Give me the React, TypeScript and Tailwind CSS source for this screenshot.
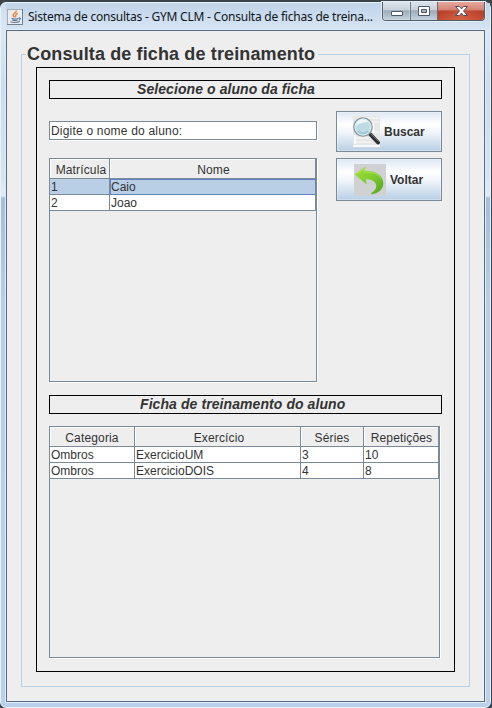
import type { ReactNode } from "react";

function JavaIcon() {
  return (
    <svg width="16" height="16" viewBox="0 0 16 16" className="shrink-0">
      <rect x=".5" y=".5" width="15" height="15" fill="#e9edf1" stroke="#a5adb7" />
      <path d="M15.5 0v15.5H0" fill="none" stroke="#747f8b" />
      <path d="M9.3 1.7C9.8 4 5 4.6 6.2 6.7l1.2 1.7M10.8 4.2C7.5 5.4 9.6 6.3 8.2 8.2" fill="none" stroke="#e28a43" strokeWidth="1.5" />
      <path d="M4.5 9.3c1.5.8 5 .8 7-.1M5.3 11c1.5.7 3.8.6 5.2 0M11.7 9c2.3-.7 2.3 1.5 0 2.2M3.5 12.8c2 1.1 7 .9 9.3-.2" fill="none" stroke="#607c9c" strokeWidth="1.1" />
    </svg>
  );
}

function SearchIcon() {
  return (
    <svg width="27" height="31" viewBox="0 0 27 31" className="shrink-0">
      <rect width="27" height="31" fill="#e6e7e7" />
      <path d="M9 2h17M18 6h8M18 16h8M2 22h14M2 26h16" stroke="#f5f5f5" strokeWidth="1.5" />
      <path d="M0 30h27M20 7v10M2 19v9" stroke="#fff" strokeWidth="1.5" />
      <path d="m16 17 9 9.5" stroke="#2c2f31" strokeWidth="3.8" strokeLinecap="round" />
      <path d="m17.5 17.5 8 8" stroke="#777b7d" strokeWidth=".9" />
      <circle cx="10" cy="11" r="9.2" fill="#bddce6" stroke="#8a969c" strokeWidth="1.3" />
      <circle cx="10" cy="11" r="8" fill="none" stroke="#deedf2" strokeWidth="1" />
      <path d="M3 10a7 7 0 0 1 12.5-4C11 6 7 7 3 10Z" fill="#eef8fa" />
      <path d="M5 15c3 3 7 3 10 0" fill="none" stroke="#a0cad6" strokeWidth="2" />
    </svg>
  );
}

function BackIcon() {
  return (
    <svg width="32" height="32" viewBox="0 0 32 32" className="shrink-0">
      <defs>
        <linearGradient id="green" x1="0" y1="0" x2="1" y2="1">
          <stop stopColor="#a4df3c" />
          <stop offset=".55" stopColor="#7aca2d" />
          <stop offset="1" stopColor="#529f22" />
        </linearGradient>
      </defs>
      <rect width="32" height="32" fill="#d0d1d2" />
      <path d="M.7 10.5 11.2 2.8v4.3C21 6.5 28.8 11 29.3 19c.3 5.7-4.3 10.2-11.8 11.4l-.5-1c4.3-2.8 6.1-6.1 4.8-9.4-1.3-3.2-4.7-4.8-9.9-4.8l.8 5.2Z" fill="url(#green)" />
      <path d="m2 10.5 8.3-6v3.7c7.5-.4 13.5 1.4 16.7 6.2" fill="none" stroke="#b8e85b" strokeWidth=".7" />
    </svg>
  );
}

function WindowControls() {
  return (
    <div className="flex h-[19px] w-[103px] overflow-hidden rounded-b-[4px] border border-t-0 border-[#505d6b] shadow-[0_0_0_1px_#e4eef8]">
      <div className="w-[28px] border-r border-[#6f7c89] bg-[linear-gradient(#dce3ea_0%,#c7d0da_45%,#9dabb9_48%,#c4d1df_100%)] shadow-[inset_0_0_0_1px_#e2e9f055]">
        <svg width="27" height="18"><rect x="8.5" y="9.5" width="11" height="4" rx=".5" fill="#fff" stroke="#4c5865" /></svg>
      </div>
      <div className="w-[27px] border-r border-[#6f656d] bg-[linear-gradient(#dce3ea_0%,#c7d0da_45%,#9dabb9_48%,#c4d1df_100%)]">
        <svg width="26" height="18"><path fillRule="evenodd" d="M7.5 4.5h11v9h-11Zm3 3v3h5v-3Z" fill="#fff" stroke="#4c5865" /></svg>
      </div>
      <div className="flex-1 bg-[radial-gradient(ellipse_at_50%_100%,#e27a5680,transparent_65%),linear-gradient(#e7a89e_0%,#d18274_45%,#b74028_49%,#c74b33_100%)]">
        <svg width="46" height="18"><path d="M17.5 4.5h4l2 2.4 2-2.4h4l-4 4.5 4 4.5h-4l-2-2.4-2 2.4h-4l4-4.5Z" fill="#fff" stroke="#584b55" strokeLinejoin="round" /></svg>
      </div>
    </div>
  );
}

function Heading({ children, className }: { children: ReactNode; className: string }) {
  return <div className={`h-[19px] w-[393px] border border-black text-[14px] leading-[17px] font-bold tracking-[0.08px] italic ${className}`}>{children}</div>;
}

function HeaderCell({ children, className = "" }: { children: ReactNode; className?: string }) {
  return <div className={`h-5 border-r border-b border-[#7a8a99] pt-px text-center leading-[20px] tracking-[0.15px] shadow-[inset_1px_1px_white] ${className}`}>{children}</div>;
}

function Cell({ children, className = "" }: { children: ReactNode; className?: string }) {
  return <div className={`h-4 border-r border-b border-[#7a8a99] bg-white pl-px leading-[16px] ${className}`}>{children}</div>;
}

function ActionButton({ icon, label, className }: { icon: ReactNode; label: string; className: string }) {
  return <button className={`flex w-[106px] items-center border border-[#7a8a99] bg-[linear-gradient(#dde8f3_0%,#fff_32%,#edf3f9_55%,#b8cfe5_100%)] font-bold shadow-[inset_0_0_0_1px_#ffffff55] ${className}`}>{icon}{label}</button>;
}

export default function App() {
  return (
    <div className="h-[708px] w-[492px] bg-[#3c444c] pt-[2px] font-['Liberation_Sans',Arial,sans-serif] text-[12px] text-[#333]">
      <div className="h-[706px] w-[491px] rounded-[6px] border border-[#e8f2fc] bg-[linear-gradient(#ccdef0_0px,#dce8f5_28px,#cbddee_85px,#d5e3f2_170px,#e0ebf7_193px,#a4bfda_195px,#b7cfe8_300px,#b9d1ea_706px)] pl-[5px]">
        <header className="flex h-[27px] items-start bg-[linear-gradient(#c0d4e9,#d7e5f3)]">
          <div className="flex w-[375px] items-center gap-[5px] pt-[5px] pl-px font-['Noto_Sans','Open_Sans',sans-serif] text-[12px] leading-[18px] tracking-[-0.22px] whitespace-nowrap text-[#10151a]"><JavaIcon /><span>Sistema de consultas - GYM CLM - Consulta de fichas de treina...</span></div>
          <div className="-mt-px ml-px"><WindowControls /></div>
        </header>
        <main className="h-[672px] w-[479px] border border-[#596b80] bg-[#eee] pt-[11px] pl-[14px] shadow-[0_0_0_1px_#dfebf6]">
          <fieldset className="h-[645px] w-[449px] border border-[#b8cfe5] pl-[14px]">
            <legend className="-ml-[10px] h-[25px] w-[292px] pl-px text-[18px] leading-[24px] font-bold tracking-[0.13px] whitespace-nowrap">Consulta de ficha de treinamento</legend>
            <section className="h-[605px] w-[419px] border border-black pt-3 pl-3">
              <Heading className="pl-[87px]">Selecione o aluno da ficha</Heading>
              <div className="mt-3 flex justify-between pr-[12px]">
                <div className="pt-[10px]">
                  <div className="h-[19px] w-[268px] border border-[#7a8a99] bg-white pl-px leading-[19px] tracking-[0.2px] shadow-[1px_1px_white]">Digite o nome do aluno:</div>
                  <div className="mt-[18px] h-[224px] w-[268px] border border-[#7a8a99] shadow-[1px_1px_white]">
                    <div className="grid grid-cols-[60px_206px]">
                      <HeaderCell className="pl-[3px]">Matrícula</HeaderCell><HeaderCell className="pl-[2px]">Nome</HeaderCell>
                      <Cell className="bg-[#b8cfe5]!">1</Cell><Cell className="border-[#6382bf]! bg-[#b8cfe5]! shadow-[inset_1px_1px_#6382bf]">Caio</Cell>
                      <Cell>2</Cell><Cell>Joao</Cell>
                    </div>
                  </div>
                </div>
                <div className="flex flex-col gap-[6px]">
                  <ActionButton icon={<SearchIcon />} label="Buscar" className="h-[41px] gap-1 pl-4" />
                  <ActionButton icon={<BackIcon />} label="Voltar" className="h-[43px] gap-1 pl-[17px]" />
                </div>
              </div>
              <Heading className="mt-[13px] pl-[90px]">Ficha de treinamento do aluno</Heading>
              <div className="mt-3 h-[232px] w-[391px] border border-[#7a8a99] shadow-[1px_1px_white]">
                <div className="grid grid-cols-[85px_166px_63px_75px]">
                  <HeaderCell>Categoria</HeaderCell><HeaderCell className="pl-[3px]">Exercício</HeaderCell><HeaderCell>Séries</HeaderCell><HeaderCell className="pl-px">Repetições</HeaderCell>
                  <Cell>Ombros</Cell><Cell>ExercicioUM</Cell><Cell>3</Cell><Cell>10</Cell>
                  <Cell>Ombros</Cell><Cell>ExercicioDOIS</Cell><Cell>4</Cell><Cell>8</Cell>
                </div>
              </div>
            </section>
          </fieldset>
        </main>
      </div>
    </div>
  );
}
